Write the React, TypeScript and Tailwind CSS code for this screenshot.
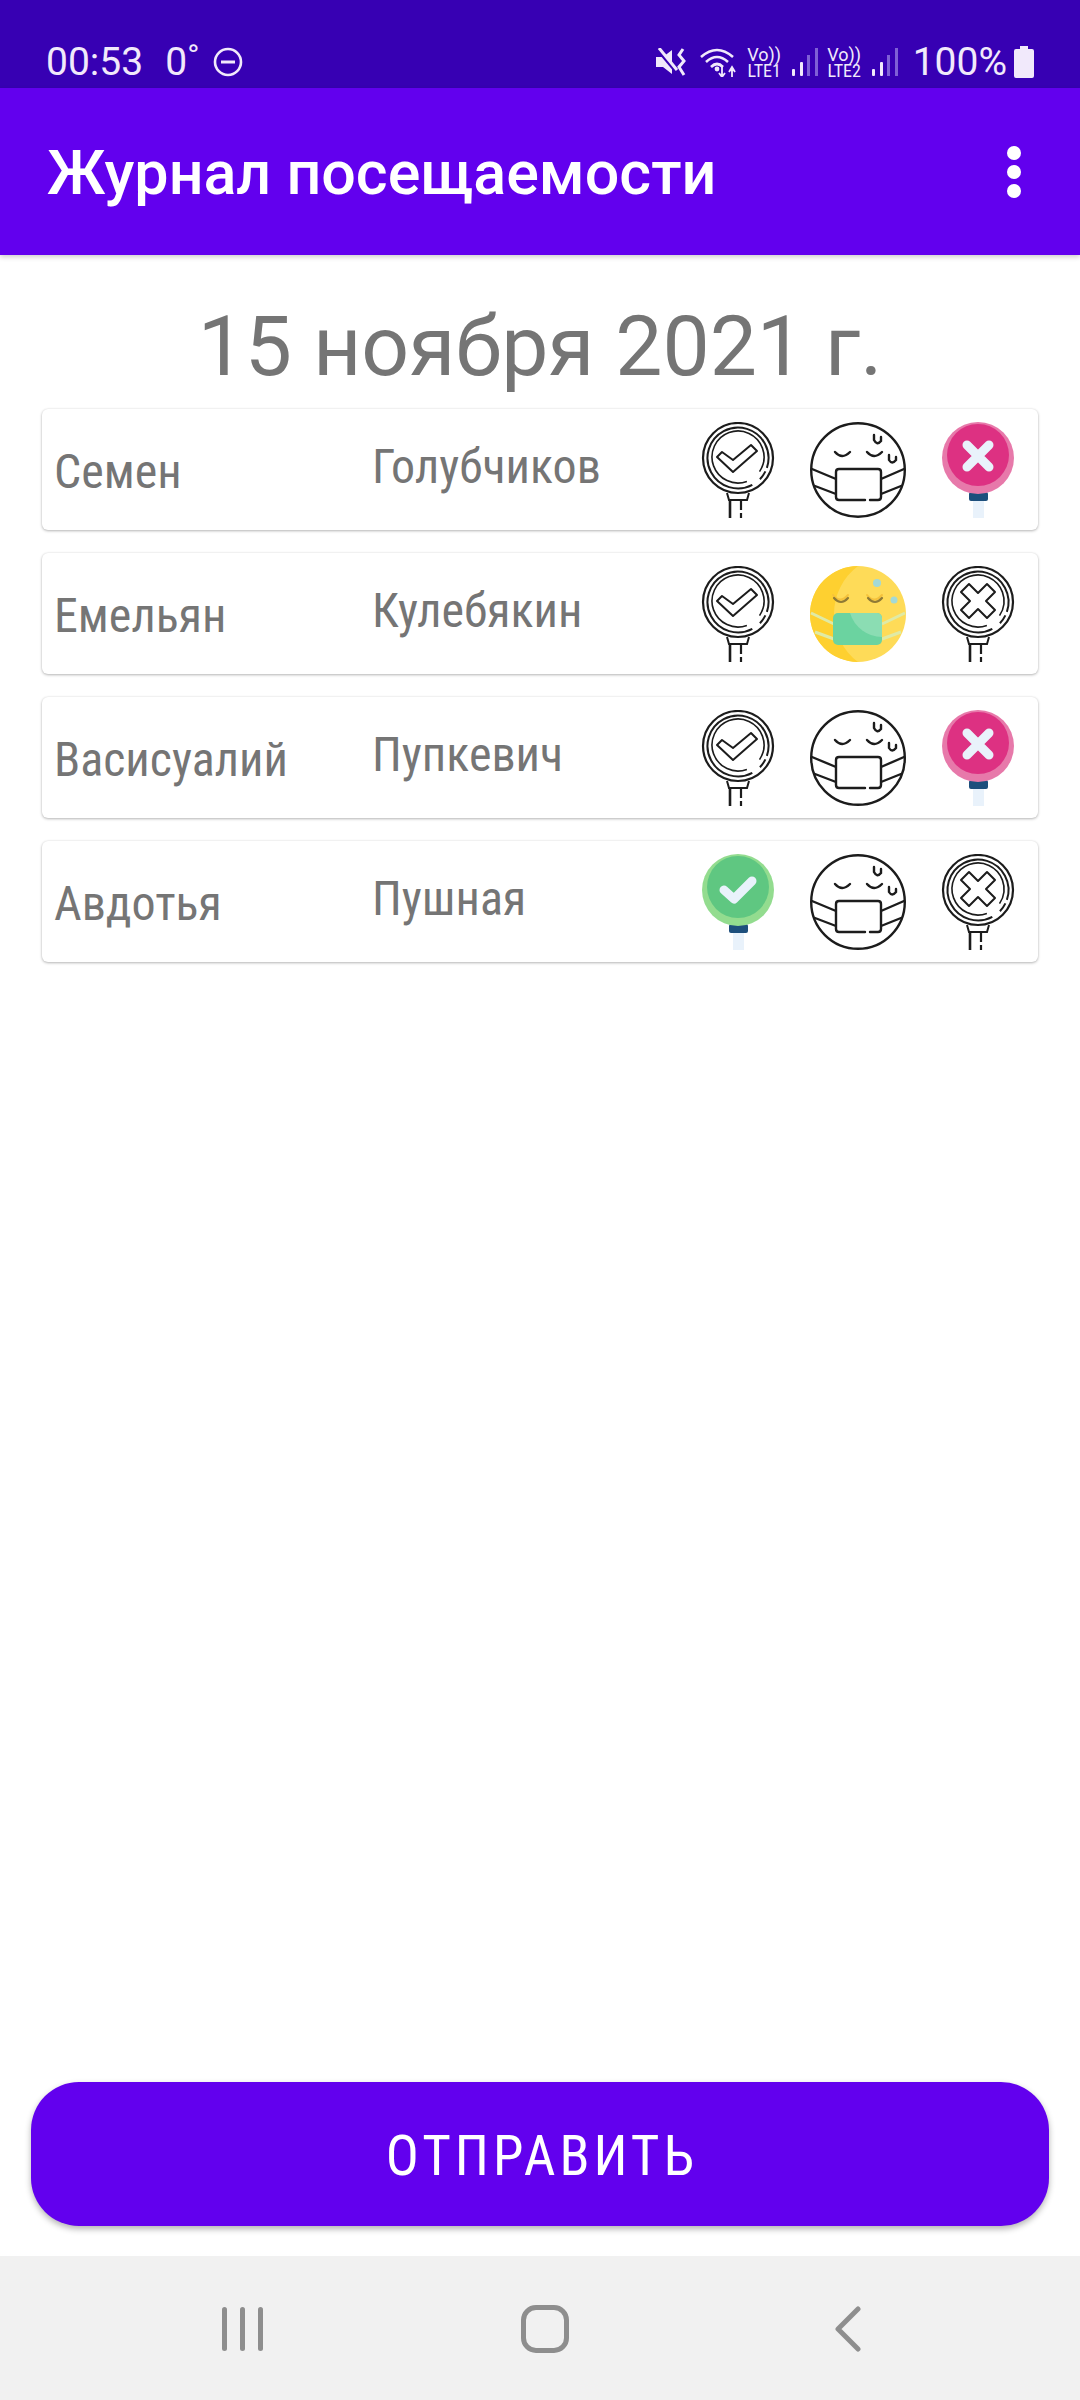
const people = [
  { first: "Семен", last: "Голубчиков", mark: "absent", sick: false },
  { first: "Емельян", last: "Кулебякин", mark: "none", sick: true },
  { first: "Васисуалий", last: "Пупкевич", mark: "absent", sick: false },
  { first: "Авдотья", last: "Пушная", mark: "present", sick: false },
];

function OutlineSign({ kind }: { kind: "check" | "cross" }) {
  return (
    <svg viewBox="-12 0 96 96" className="w-24 h-24 shrink-0 blur-[0.3px]">
      <g fill="none" stroke="#1c1c1c" strokeWidth="2">
        <circle cx="36" cy="36" r="35" strokeWidth="2.2" />
        <circle cx="36" cy="36" r="30.5" pathLength="100" strokeDasharray="88 2 5 5" transform="rotate(62 36 36)" />
        <circle cx="36" cy="35" r="26" strokeWidth="1.6" pathLength="100" strokeDasharray="90 10" transform="rotate(70 36 35)" />
        {kind === "check" ? (
          <path d="M15 35 L20 30 L31 38 L49 23 L55 29 L31 50 Z" strokeLinejoin="round" />
        ) : (
          <path d="M36 27 L45 18 L53 26 L44 35 L53 44 L45 52 L36 43 L27 52 L19 44 L28 35 L19 26 L27 18 Z" strokeLinejoin="round" />
        )}
        <path d="M25 71 L27 78 L45 78 L47 71" />
        <path d="M28 78 L28 96" strokeWidth="2.6" />
        <path d="M39 78 L39 88 M39 91 L39 96" strokeWidth="2.2" />
      </g>
    </svg>
  );
}

function FilledSign({ kind }: { kind: "check" | "cross" }) {
  const ring = kind === "check" ? "#93dc8f" : "#e779aa";
  const fill = kind === "check" ? "#5fc781" : "#dd3182";
  return (
    <svg viewBox="-12 0 96 96" className="w-24 h-24 shrink-0 blur-[0.3px]">
      <rect x="31" y="74" width="11" height="22" fill="#e9f2fb" />
      <rect x="27" y="70" width="19" height="9" rx="2" fill="#1d4f7c" />
      <circle cx="36" cy="36" r="36" fill={ring} />
      <circle cx="36" cy="33" r="31" fill={fill} />
      {kind === "check" ? (
        <path d="M22 36 L32 45 L50 27" fill="none" stroke="#e9f2fb" strokeWidth="9" strokeLinecap="round" strokeLinejoin="round" />
      ) : (
        <path d="M25 23 L47 45 M47 23 L25 45" fill="none" stroke="#e9f2fb" strokeWidth="9" strokeLinecap="round" />
      )}
    </svg>
  );
}

function MaskFace({ active }: { active: boolean }) {
  if (active) {
    return (
      <svg viewBox="0 0 96 96" className="w-24 h-24 shrink-0 blur-[0.3px]">
        <circle cx="48" cy="48" r="48" fill="#fedb58" />
        <path d="M48 0 A48 48 0 0 0 48 96 A60 60 0 0 1 48 0 Z" fill="#fed030" />
        <path d="M1 47 L24 58 M5 66 L24 73 M95 47 L72 58 M91 66 L72 73" stroke="#dfeaa6" strokeWidth="3" fill="none" />
        <rect x="23" y="47" width="49" height="32" rx="5" fill="#6bd3a0" />
        <path d="M40 47 H67 A5 5 0 0 1 72 52 V71 A34 34 0 0 1 40 47 Z" fill="#8bddb3" />
        <g fill="none" strokeLinecap="round">
          <path d="M23 29 Q30 38 38 29" stroke="#f5c23c" strokeWidth="2" />
          <path d="M24 32 Q31 40 38 32" stroke="#8f7a35" strokeWidth="2.2" />
          <path d="M57 29 Q64 38 72 29" stroke="#f5c23c" strokeWidth="2" />
          <path d="M58 32 Q65 40 72 32" stroke="#8f7a35" strokeWidth="2.2" />
        </g>
        <circle cx="67" cy="17" r="4" fill="#a3d9d5" />
        <circle cx="84" cy="34" r="3.5" fill="#a3d9d5" />
      </svg>
    );
  }
  return (
    <svg viewBox="0 0 96 96" className="w-24 h-24 shrink-0 blur-[0.3px]">
      <g fill="none" stroke="#1c1c1c" strokeWidth="2.4" strokeLinecap="round">
        <circle cx="48" cy="48" r="46.8" />
        <path d="M2 47 L26 57 M5 64 L26 72 M94 47 L71 57 M91 64 L71 72" />
        <rect x="26" y="47" width="45" height="31" rx="3" fill="#fff" stroke="none" />
        <path d="M55 78 H29 Q26 78 26 75 V50 Q26 47 29 47 H68 Q71 47 71 50 V75 Q71 78 68 78 H60" />
        <path d="M25 30 Q32 38 40 30" />
        <path d="M57 30 Q64 38 72 30" />
        <path d="M64 13 V18 Q67 24 71 19 V15" />
        <path d="M79 33 V38 Q82 43 86 38 V35" />
      </g>
    </svg>
  );
}

function PersonRow({ first, last, mark, sick }: { first: string; last: string; mark: string; sick: boolean }) {
  return (
    <div className="flex h-[121px] rounded-[6px] bg-white pl-3 pr-3 pt-[13px] shadow-[0_1px_3px_rgba(0,0,0,0.28),0_0_2px_rgba(0,0,0,0.08)]">
      <div className="w-[318px] pt-5 text-[48px] leading-[60px] font-stretch-condensed text-[#757575]">{first}</div>
      <div className="flex-1 pt-[15px] text-[48px] leading-[60px] font-stretch-condensed text-[#757575]">{last}</div>
      <div className="flex gap-6">
        {mark === "present" ? <FilledSign kind="check" /> : <OutlineSign kind="check" />}
        <MaskFace active={sick} />
        {mark === "absent" ? <FilledSign kind="cross" /> : <OutlineSign kind="cross" />}
      </div>
    </div>
  );
}

function SimBlock({ label }: { label: string }) {
  return (
    <div className="flex items-center">
      <div className="flex w-[39px] flex-col items-center pt-[2px] text-[18px] leading-[16px]">
        <span>Vo))</span>
        <span className="whitespace-nowrap font-stretch-condensed">{label}</span>
      </div>
      <svg viewBox="0 0 26 28" className="ml-2 h-7 w-[26px]">
        <rect x="0" y="21" width="3" height="7" rx="1" fill="#f1e9fb" />
        <rect x="8" y="14" width="3" height="14" rx="1" fill="#f1e9fb" />
        <rect x="15" y="7" width="3" height="21" fill="#7f5fd6" />
        <rect x="23" y="0" width="3" height="28" fill="#7f5fd6" />
      </svg>
    </div>
  );
}

function StatusBar() {
  return (
    <div className="flex h-[88px] items-center bg-[#3700b3] pl-[46px] pr-[46px] pt-[36px] text-[39px] leading-[48px] text-[#f1e9fb]">
      <span>00:53</span>
      <span className="ml-[22px]">0˚</span>
      <svg viewBox="0 0 30 30" className="ml-[13px] h-[30px] w-[30px]">
        <circle cx="15" cy="15" r="13" fill="none" stroke="#f1e9fb" strokeWidth="2.6" />
        <rect x="8" y="13.5" width="14" height="3" fill="#f1e9fb" />
      </svg>
      <div className="flex-1" />
      {/* mute */}
      <svg viewBox="0 0 32 28" className="h-7 w-8">
        <path d="M0 9 H7 L16 2 V26 L7 19 H0 Z" fill="#f1e9fb" />
        <path d="M1 1 L21 25" stroke="#3700b3" strokeWidth="3" />
        <path d="M3 0 L21 22" stroke="#f1e9fb" strokeWidth="3" />
        <path d="M27 1 L23 7 L28 13 L23 19 L28 27" fill="none" stroke="#f1e9fb" strokeWidth="3" />
      </svg>
      {/* wifi */}
      <svg viewBox="0 0 38 30" className="ml-3 h-[30px] w-[38px]">
        <g fill="none" stroke="#f1e9fb" strokeWidth="2.6">
          <path d="M1 10 Q17 -4 33 10" />
          <path d="M6 15 Q17 5 28 15" />
          <path d="M11 20 Q17 14 23 20" />
        </g>
        <circle cx="17" cy="22" r="2.4" fill="#f1e9fb" />
        <path d="M22 20 V29 M19 26 L22 30 L25 26 M32 30 V21 M29 25 L32 20 L35 25" fill="none" stroke="#f1e9fb" strokeWidth="1.8" />
      </svg>
      <div className="ml-[7px] flex gap-[7px]">
        <SimBlock label="LTE1" />
        <SimBlock label="LTE2" />
      </div>
      <span className="ml-[15px]">100%</span>
      <svg viewBox="0 0 20 32" className="ml-[7px] h-8 w-5">
        <path d="M6 0 H14 V3 H18 A2 2 0 0 1 20 5 V30 A2 2 0 0 1 18 32 H2 A2 2 0 0 1 0 30 V5 A2 2 0 0 1 2 3 H6 Z" fill="#f1e9fb" />
      </svg>
    </div>
  );
}

function AppBar() {
  return (
    <div className="relative z-10 flex h-[167px] items-center justify-between bg-[#6200ee] pl-[47px] pr-[59px] shadow-[0_2px_5px_rgba(0,0,0,0.2)]">
      <span className="pt-1 text-[61px] font-medium text-white">Журнал посещаемости</span>
      <div className="flex flex-col gap-[5px]">
        <div className="h-[14px] w-[14px] rounded-full bg-white" />
        <div className="h-[14px] w-[14px] rounded-full bg-white" />
        <div className="h-[14px] w-[14px] rounded-full bg-white" />
      </div>
    </div>
  );
}

function NavBar() {
  return (
    <div className="flex h-[144px] items-center bg-[#f1f1f1] pl-[222px] pt-[2px]">
      <div className="flex gap-[13px]">
        <div className="h-[44px] w-[5px] rounded-full bg-[#8e8e8e]" />
        <div className="h-[44px] w-[5px] rounded-full bg-[#8e8e8e]" />
        <div className="h-[44px] w-[5px] rounded-full bg-[#8e8e8e]" />
      </div>
      <div className="ml-[258px] h-[48px] w-[48px] rounded-[15px] border-[5px] border-[#8e8e8e]" />
      <svg viewBox="0 0 27 46" className="ml-[265px] h-[46px] w-[27px]">
        <path d="M24 3 L4 23 L24 43" fill="none" stroke="#8e8e8e" strokeWidth="5" strokeLinecap="round" strokeLinejoin="round" />
      </svg>
    </div>
  );
}

export default function App() {
  return (
    <div className="flex h-[2400px] w-full flex-col bg-white font-['Roboto',sans-serif]">
      <StatusBar />
      <AppBar />
      <div className="flex flex-1 flex-col px-[42px]">
        <div className="mt-[27px] h-[127px] text-center text-[84px] leading-[130px] text-[#757575]">15 ноября 2021 г.</div>
        <div className="flex flex-col gap-[23px]">
          {people.map(p => (
            <PersonRow key={p.first} {...p} />
          ))}
        </div>
      </div>
      <div className="px-[31px] pb-[30px]">
        <button className="h-[144px] w-full rounded-[48px] bg-[#6200ee] pl-1 pt-1 text-[55px] tracking-[4px] font-stretch-condensed text-white shadow-[0_3px_6px_rgba(0,0,0,0.3)]">
          ОТПРАВИТЬ
        </button>
      </div>
      <NavBar />
    </div>
  );
}
